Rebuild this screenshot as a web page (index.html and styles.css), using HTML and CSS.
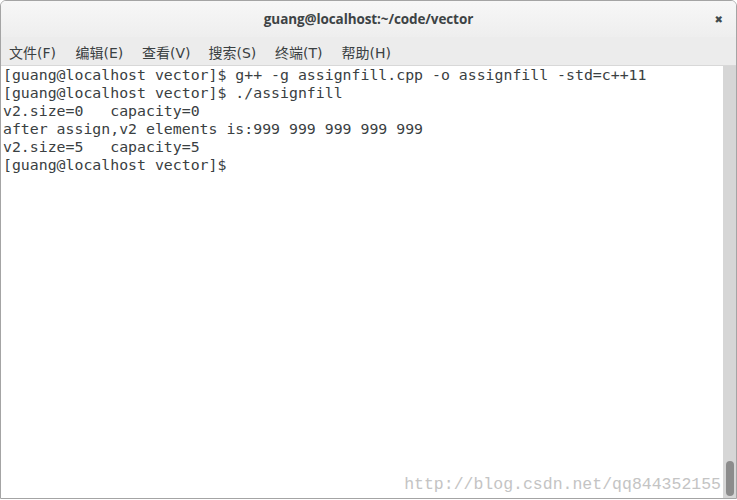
FILE: index.html
```html
<!DOCTYPE html>
<html lang="zh">
    <head>
        <meta charset="UTF-8">
        <title>guang@localhost:~/code/vector</title>
        <link rel="stylesheet" href="styles.css">
    </head>
    <body>
        <article class="janela">
            <header class="titulo">
                <span class="titulo-texto">guang@localhost:~/code/vector</span>
                <span class="fechar">&#x2716;</span>
            </header>
            <nav class="menu">
                <a>文件(F)</a>
                <a>编辑(E)</a>
                <a>查看(V)</a>
                <a>搜索(S)</a>
                <a>终端(T)</a>
                <a>帮助(H)</a>
            </nav>
            <section class="terminal">
                <pre class="saida">[guang@localhost vector]$ g++ -g assignfill.cpp -o assignfill -std=c++11
[guang@localhost vector]$ ./assignfill
v2.size=0   capacity=0
after assign,v2 elements is:999 999 999 999 999
v2.size=5   capacity=5
[guang@localhost vector]$ </pre>
                <div class="marca">http://blog.csdn.net/qq844352155</div>
                <div class="rolagem">
                    <div class="polegar"></div>
                </div>
            </section>
        </article>
    </body>
</html>
```

FILE: styles.css
```css
* {
    padding: 0px;
    margin: 0px;
    box-sizing: border-box;
}

body {
    background-color: #ffffff;
    width: 737px;
    height: 500px;
    overflow: hidden;
}

.janela {
    width: 737px;
    height: 499px;
    border: 1px solid #a4a4a4;
    border-radius: 6px 6px 0 0;
    display: flex;
    flex-direction: column;
    overflow: hidden;
}

.titulo {
    height: 36px;
    flex: none;
    background: linear-gradient(#f7f7f7, #eeeeee);
    display: flex;
    align-items: center;
    justify-content: center;
    position: relative;
    font-family: "Open Sans", "DejaVu Sans", sans-serif;
}

.titulo-texto {
    font-size: 13.5px;
    font-weight: bold;
    color: #3d4345;
    letter-spacing: -0.1px;
}

.fechar {
    position: absolute;
    right: 13px;
    top: 11px;
    font-size: 10px;
    color: #404a4e;
}

.menu {
    height: 28px;
    flex: none;
    background-color: #ececec;
    display: flex;
    align-items: center;
    padding-left: 8px;
    padding-top: 1px;
    font-family: "DejaVu Sans", "Noto Sans CJK SC", sans-serif;
    font-size: 14px;
    color: #3a4042;
}

.menu a {
    width: 66.5px;
}

.terminal {
    flex: 1;
    position: relative;
    background-color: #ffffff;
    border-top: 1px solid #d8d8d8;
}

.saida {
    padding: 0 0 0 2px;
    font-family: "DejaVu Sans Mono", monospace;
    font-size: 14.85px;
    line-height: 18px;
    color: #3a4042;
}

.marca {
    position: absolute;
    right: 15px;
    bottom: 4px;
    font-family: "Liberation Mono", monospace;
    font-size: 16.5px;
    color: #c4c4c4;
}

.rolagem {
    position: absolute;
    right: 0;
    top: 0;
    bottom: 0;
    width: 13px;
    background-color: #d6d6d6;
}

.polegar {
    position: absolute;
    left: 3px;
    right: 2px;
    bottom: 2px;
    height: 35px;
    border-radius: 4px;
    background-color: #8c8c8c;
}
```
